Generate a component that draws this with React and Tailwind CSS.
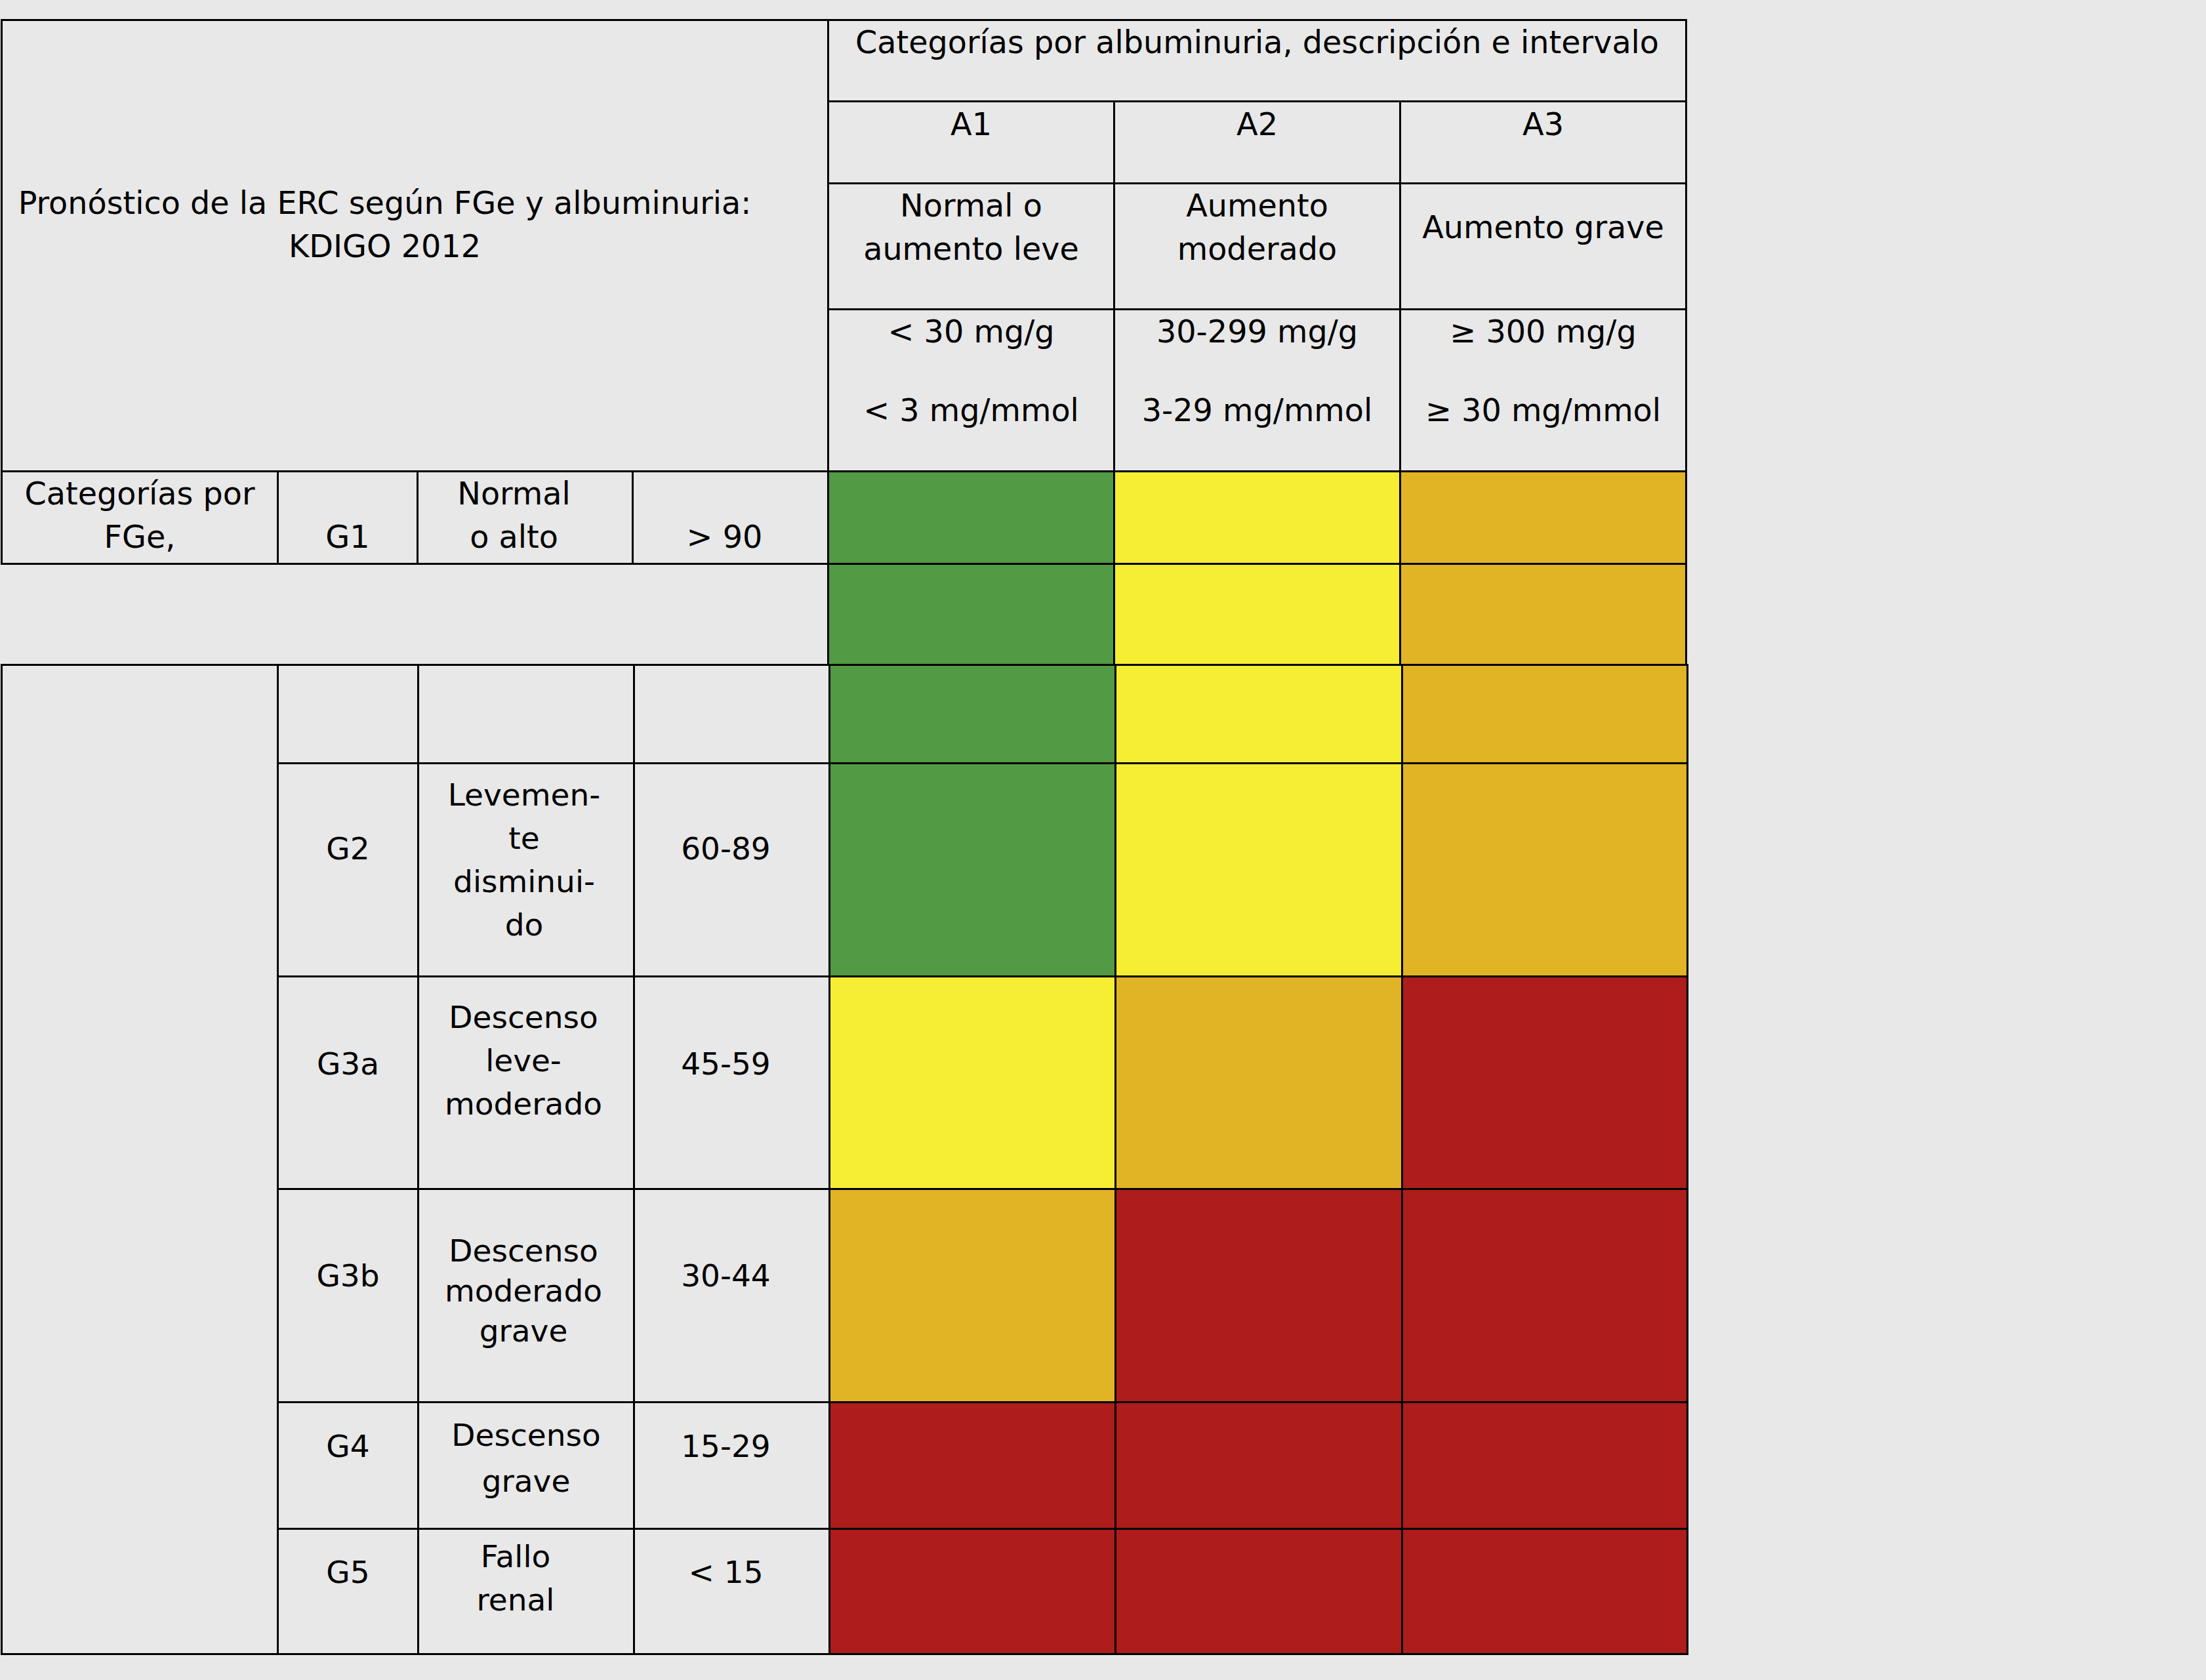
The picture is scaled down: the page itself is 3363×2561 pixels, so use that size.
import React from 'react';

/* colours of the risk grid */
const RISK = {
  g: "bg-[#529a43]",
  y: "bg-[#f5ee32]",
  o: "bg-[#e1b425]",
  r: "bg-[#ae1c1c]",
};

function Cell({ lines, className = "" }) {
  return (
    <div className={`bg-[#e8e8e8] text-center ${className}`}>
      {lines.map((l, i) => (
        <div key={i} className="whitespace-nowrap">{l}</div>
      ))}
    </div>
  );
}

function Risk({ c }) {
  return <div className={RISK[c]} />;
}

const LOWER = [
  { g: "", desc: [], range: "", colors: ["g", "y", "o"] },
  { g: "G2", gPt: "pt-[96px]", desc: ["Levemen-", "te", "disminui-", "do"], dPt: "pt-[14px] pr-[6px]", range: "60-89", colors: ["g", "y", "o"] },
  { g: "G3a", gPt: "pt-[99px]", desc: ["Descenso", "leve-", "moderado"], dPt: "pt-[28px] pr-[8px]", range: "45-59", colors: ["y", "o", "r"] },
  { g: "G3b", gPt: "pt-[98px]", desc: ["Descenso", "moderado", "grave"], dPt: "pt-[62px] pr-[8px] leading-[61px]", range: "30-44", colors: ["o", "r", "r"] },
  { g: "G4", gPt: "pt-[33px]", desc: ["Descenso", "grave"], dPt: "pt-[14px] leading-[70px]", range: "15-29", colors: ["r", "r", "r"] },
  { g: "G5", gPt: "pt-[32px]", desc: ["Fallo", "renal"], dPt: "pt-[8px] pr-[32px]", range: "< 15", colors: ["r", "r", "r"] },
];

export default function App() {
  return (
    <div className="min-h-[2561px] w-[3363px] bg-[#e8e8e8] pt-[29px] pl-[1px] text-black text-[47px] leading-[66px] [font-family:'DejaVu_Sans','Verdana',sans-serif]">
      {/* upper block: title + albuminuria header + G1 */}
      <div className="grid w-fit bg-black p-[3px] gap-[3px] text-[47.7px] grid-cols-[418px_210px_325px_295px_433px_433px_433px] grid-rows-[121px_122px_189px_244px_138px]">
        <div className="col-span-4 row-span-4 bg-[#e8e8e8] flex justify-center items-start pt-[245px] pr-[92px]">
          <div className="text-center whitespace-nowrap">
            Pronóstico de la ERC según FGe y albuminuria:
            <br />
            KDIGO 2012
          </div>
        </div>
        <Cell className="col-span-3" lines={["Categorías por albuminuria, descripción e intervalo"]} />

        <Cell className="pt-[1px]" lines={["A1"]} />
        <Cell className="pt-[1px]" lines={["A2"]} />
        <Cell className="pt-[1px]" lines={["A3"]} />

        <Cell lines={["Normal o", "aumento leve"]} />
        <Cell lines={["Aumento", "moderado"]} />
        <Cell className="pt-[33px]" lines={["Aumento grave"]} />

        <div className="bg-[#e8e8e8] flex flex-col items-center gap-[54px]"><div>&lt; 30 mg/g</div><div>&lt; 3 mg/mmol</div></div>
        <div className="bg-[#e8e8e8] flex flex-col items-center gap-[54px]"><div>30-299 mg/g</div><div>3-29 mg/mmol</div></div>
        <div className="bg-[#e8e8e8] flex flex-col items-center gap-[54px]"><div>≥ 300 mg/g</div><div>≥ 30 mg/mmol</div></div>

        <Cell lines={["Categorías por", "FGe,"]} />
        <Cell className="pt-[66px]" lines={["G1"]} />
        <Cell className="pr-[34px]" lines={["Normal", "o alto"]} />
        <Cell className="pt-[66px] pr-[18px]" lines={["> 90"]} />
        <Risk c="g" />
        <Risk c="y" />
        <Risk c="o" />
      </div>

      {/* blank strip: only the colour columns continue */}
      <div className="flex h-[151px]">
        <div className="w-[1260px]" />
        <div className="grid bg-black px-[3px] gap-x-[3px] grid-cols-[433px_433px_433px]">
          <Risk c="g" />
          <Risk c="y" />
          <Risk c="o" />
        </div>
      </div>

      {/* lower block: G2..G5 */}
      <div className="grid w-fit bg-black p-[3px] gap-[3px] grid-cols-[418px_211px_326px_295px_433px_434px_432px] grid-rows-[147px_322px_321px_322px_190px_188px]">
        <div className="row-span-6 bg-[#e8e8e8]" style={{ gridRow: "1 / span 6", gridColumn: "1" }} />
        {LOWER.map((r, i) => (
          <React.Fragment key={i}>
            <Cell className={r.gPt || ""} lines={r.g ? [r.g] : []} />
            <Cell className={r.dPt || ""} lines={r.desc} />
            <Cell className={`${r.gPt || ""} pr-[18px]`} lines={r.range ? [r.range] : []} />
            {r.colors.map((c, j) => (
              <Risk key={j} c={c} />
            ))}
          </React.Fragment>
        ))}
      </div>
    </div>
  );
}
